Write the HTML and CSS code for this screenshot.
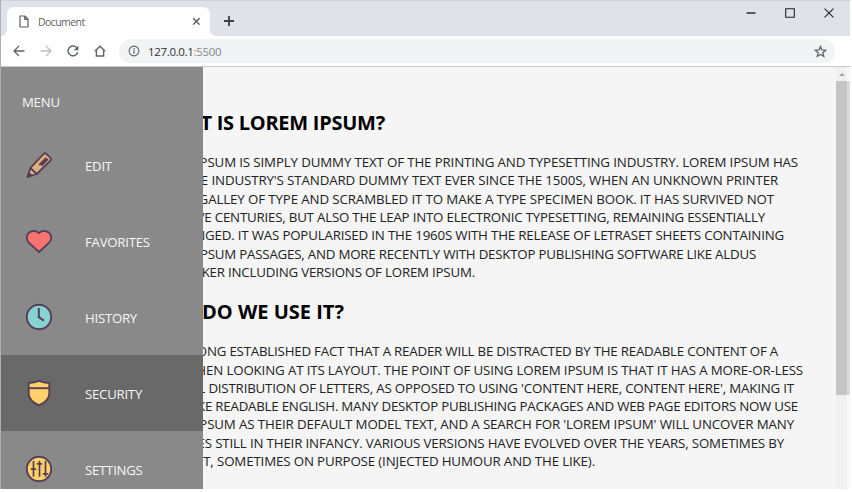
FILE: index.html
```html
<!DOCTYPE html>
<html lang="en">
<head>
<meta charset="utf-8">
<title>Document</title>
<link rel="stylesheet" href="styles.css">
</head>
<body>
<div class="window">
  <header class="tabstrip">
    <div class="tab">
      <svg class="tab-file" width="10" height="13" viewBox="0 0 10 13"><path d="M1 1h5l3 3v8H1zM5.7 1v3.4H9" fill="none" stroke="#5f6368" stroke-width="1.2"/></svg>
      <span class="tab-title">Document</span>
      <svg width="9" height="9" viewBox="0 0 9 9"><path d="M1.2 1.2l6.4 6.4M7.6 1.2L1.2 7.6" stroke="#4b4f54" stroke-width="1.3"/></svg>
    </div>
    <svg class="new-tab" width="12" height="12" viewBox="0 0 12 12"><path d="M6 1v10M1 6h10" stroke="#3c4043" stroke-width="1.8"/></svg>
    <div class="controls">
      <svg width="10" height="10" viewBox="0 0 10 10"><path d="M.5 5h9" stroke="#222" stroke-width="1.4"/></svg>
      <svg width="10" height="10" viewBox="0 0 10 10"><path d="M.7.7h8.6v8.6H.7z" fill="none" stroke="#222" stroke-width="1.1"/></svg>
      <svg width="10" height="10" viewBox="0 0 10 10"><path d="M.6.6l8.8 8.8M9.4.6L.6 9.4" stroke="#222" stroke-width="1.1"/></svg>
    </div>
  </header>
  <div class="toolbar">
    <svg class="nav" width="12" height="12" viewBox="0 0 12 12"><path d="M11.5 6H1.2M6 1L1 6l5 5" fill="none" stroke="#5f6368" stroke-width="1.3"/></svg>
    <svg class="nav" width="12" height="12" viewBox="0 0 12 12"><path d="M.5 6h10.3M6 1l5 5-5 5" fill="none" stroke="#bdc1c6" stroke-width="1.3"/></svg>
    <svg class="nav" width="12" height="12" viewBox="0 0 12 12"><path d="M10.7 7.2A4.9 4.9 0 1 1 9.6 2.6" fill="none" stroke="#5f6368" stroke-width="1.4"/><path d="M11.4.6v4.6H6.8z" fill="#5f6368"/></svg>
    <svg class="nav" width="12" height="12" viewBox="0 0 12 12"><path d="M.8 6.2L6 1.2l5.2 5M2.4 5v6h7.2V5" fill="none" stroke="#5f6368" stroke-width="1.4"/></svg>
    <div class="address">
      <svg width="12" height="12" viewBox="0 0 12 12"><circle cx="6" cy="6" r="4.9" fill="none" stroke="#5f6368" stroke-width="1.1"/><path d="M6 5.3v3.4M6 3.1v1.3" stroke="#5f6368" stroke-width="1.2"/></svg>
      <span class="url">127.0.0.1<span class="port">:5500</span></span>
      <svg width="13" height="13" viewBox="0 0 24 24"><path d="M12 2.8l2.7 6.4 7 .6-5.3 4.6 1.6 6.8-6-3.6-6 3.6 1.6-6.8L2.3 9.8l7-.6z" fill="none" stroke="#5f6368" stroke-width="2.4"/></svg>
    </div>
  </div>
  <div class="viewport">
    <main class="page">
      <h2 class="h-what">What is Lorem Ipsum?</h2>
      <div class="para">
        <div class="a1">Lorem Ipsum is simply dummy text of the printing and typesetting industry. Lorem Ipsum has</div>
        <div class="a2">been the industry's standard dummy text ever since the 1500s, when an unknown printer</div>
        <div class="a3">took a galley of type and scrambled it to make a type specimen book. It has survived not</div>
        <div class="a4">only five centuries, but also the leap into electronic typesetting, remaining essentially</div>
        <div class="a5">unchanged. It was popularised in the 1960s with the release of Letraset sheets containing</div>
        <div class="a6">Lorem Ipsum passages, and more recently with desktop publishing software like Aldus</div>
        <div class="a7">PageMaker including versions of Lorem Ipsum.</div>
      </div>
      <h2 class="h-why">Why do we use it?</h2>
      <div class="para">
        <div class="b1">It is a long established fact that a reader will be distracted by the readable content of a</div>
        <div class="b2">page when looking at its layout. The point of using Lorem Ipsum is that it has a more-or-less</div>
        <div class="b3">normal distribution of letters, as opposed to using 'Content here, content here', making it</div>
        <div class="b4">look like readable English. Many desktop publishing packages and web page editors now use</div>
        <div class="b5">Lorem Ipsum as their default model text, and a search for 'lorem ipsum' will uncover many</div>
        <div class="b6">web sites still in their infancy. Various versions have evolved over the years, sometimes by</div>
        <div class="b7">accident, sometimes on purpose (injected humour and the like).</div>
      </div>
    </main>
    <nav class="sidebar">
      <div class="menu-title">Menu</div>
      <a class="item">
        <svg width="28" height="28" viewBox="0 0 28 28" stroke="#553d58" stroke-width="1.8" stroke-linejoin="round" stroke-linecap="round"><path d="M2.600 25.800L5.400 17 18.700 2.800q1.300-1.200 2.600 0l4.200 4.100q1.200 1.300 0 2.600L11.700 23z" fill="#deb17c"/><path d="M5.400 17l6.300 6M14.800 13.500l6-6.200M17 14l5.500-5.600" fill="none"/><path d="M2.600 25.800l1.200-3.800 2.500 2.500z" fill="#553d58"/></svg>
        <span>Edit</span>
      </a>
      <a class="item">
        <svg width="28" height="28" viewBox="0 0 28 28"><path d="M14 25L3.800 15.600C.7 12.300 1.300 7.800 4.200 5.600 7.400 3.200 11.500 3.700 14 6.100c2.500-2.400 6.600-2.900 9.800-.5 2.900 2.200 3.500 6.700.4 10z" fill="#f8726f" stroke="#553d58" stroke-width="1.900" stroke-linejoin="round"/></svg>
        <span>Favorites</span>
      </a>
      <a class="item">
        <svg width="28" height="28" viewBox="0 0 28 28"><circle cx="14" cy="14" r="12.200" fill="#87d3d2" stroke="#553d58" stroke-width="1.900"/><path d="M13.800 5.800v8.400l4.400 3" fill="none" stroke="#553d58" stroke-width="2" stroke-linecap="round"/></svg>
        <span>History</span>
      </a>
      <a class="item active">
        <svg width="28" height="28" viewBox="0 0 28 28" stroke="#553d58" stroke-width="1.900" stroke-linejoin="round"><path d="M14 1.900Q18.500 3.900 24.300 4v11.300Q23.500 22 14 26.400 4.500 22 3.700 15.300V4Q9.500 3.900 14 1.900z" fill="#ffd16b"/><path d="M3.700 9.200h20.600" fill="none"/></svg>
        <span>Security</span>
      </a>
      <a class="item">
        <svg width="28" height="28" viewBox="0 0 28 28" stroke="#553d58" stroke-width="1.900"><circle cx="14" cy="14" r="12.200" fill="#ffd16b"/><path d="M8.500 6.500v14.500M14.500 6.500v14.500M20.500 6.500v14.500M6.500 14.200h4M12.500 8.800h4M18.500 18.800h4" fill="none" stroke-width="1.700" stroke-linecap="round"/></svg>
        <span>Settings</span>
      </a>
    </nav>
    <div class="scrollbar">
      <div class="arrow"></div>
      <div class="thumb"></div>
    </div>
  </div>
</div>
</body>
</html>
```
FILE: styles.css
```css
* { box-sizing: border-box; }
body { margin: 0; background: #fff; font-family: "Open Sans", "Noto Sans", sans-serif; overflow: hidden; }
svg { display: block; flex: none; }

.window { width: 850px; height: 489px; overflow: hidden; display: flex; flex-direction: column; border-left: 1px solid #aeafb1; }

/* Tab strip */
.tabstrip { height: 36px; flex: none; background: #dfe2e8; border-top: 1px solid #cfd2d7; display: flex; padding-left: 6px; }
.tab { position: relative; width: 203px; height: 29px; margin-top: 6px; padding: 0 9px 0 12px; background: #fff; border-radius: 7px 7px 0 0; display: flex; align-items: center; }
.tab::before, .tab::after { content: ""; position: absolute; bottom: 0; width: 6px; height: 6px; }
.tab::before { left: -6px; background: radial-gradient(circle at 0 0, transparent 5.5px, #fff 6px); }
.tab::after { right: -6px; background: radial-gradient(circle at 100% 0, transparent 5.5px, #fff 6px); }
.tab-title { flex: 1; margin-left: 9px; font-size: 10.5px; letter-spacing: -.58px; color: #5b5f64; }
.new-tab { margin: 14px 0 0 13px; }
.controls { margin-left: auto; display: flex; gap: 29px; padding: 7px 16px 0 0; }

/* Toolbar */
.toolbar { height: 31px; flex: none; background: #fff; border-bottom: 1px solid #c6c6c6; display: flex; align-items: center; padding: 0 15px 0 12px; }
.nav { margin-right: 15px; }
.address { flex: 1; height: 24px; border-radius: 12px; background: #f1f3f4; display: flex; align-items: center; padding: 0 8px 0 9px; margin-left: -2px; }
.url { flex: 1; margin-left: 8px; font-size: 11.5px; letter-spacing: -.33px; color: #2d3033; }
.port { color: #85898e; }

/* Page area: the drawer lies over the article */
.viewport { flex: 1; min-height: 0; display: grid; grid-template-columns: 202px 1fr 14px; background: #f5f5f5; }
.page { grid-area: 1 / 1 / 2 / 3; min-width: 0; overflow: hidden; padding-top: 42px; text-transform: uppercase; text-align: right; }
.page h2 { margin: 0; font-size: 20px; line-height: 27px; font-weight: 700; color: #000; white-space: nowrap; }
.para { margin: 17.2px 0 17.2px; font-size: 13.3px; line-height: 18.27px; color: #222; white-space: nowrap; }
.h-what { width: 384px; letter-spacing: -.26px; }
.h-why { width: 343px; }
.a1 { width: 797px; letter-spacing: -.136px; }
.a2 { width: 777px; letter-spacing: -.117px; }
.a3 { width: 773px; letter-spacing: -.119px; }
.a4 { width: 764px; letter-spacing: -.209px; }
.a5 { width: 783px; letter-spacing: -.179px; }
.a6 { width: 755px; letter-spacing: -.219px; }
.a7 { width: 474px; letter-spacing: -.205px; }
.b1 { width: 777px; letter-spacing: -.214px; }
.b2 { width: 802px; letter-spacing: -.142px; }
.b3 { width: 793px; letter-spacing: -.184px; }
.b4 { width: 797px; letter-spacing: -.233px; }
.b5 { width: 793px; letter-spacing: -.131px; }
.b6 { width: 783px; letter-spacing: -.164px; }
.b7 { width: 594px; letter-spacing: -.141px; }

/* Drawer */
.sidebar { grid-area: 1 / 1 / 2 / 2; z-index: 1; overflow: hidden; background: #898989; color: #f7f7f7; text-transform: uppercase; font-size: 13.2px; letter-spacing: -.24px; }
.menu-title { height: 59.6px; padding: 26px 0 0 21px; line-height: 18px; }
.item { height: 76.2px; display: flex; align-items: center; gap: 32px; padding-left: 24px; }
.item span { padding-top: 2px; }
.item.active { background: #696969; }

/* Scrollbar */
.scrollbar { grid-area: 1 / 3 / 2 / 4; background: linear-gradient(90deg, #f1f1f1 11px, #f8f8f8 11px); }
.arrow { width: 0; height: 0; margin: 6px 0 5px 3px; border: 3px solid transparent; border-top: 0; border-bottom: 3px solid #a3a3a3; }
.thumb { height: 314px; background: linear-gradient(90deg, #c5c5c5 11px, #dadada 11px); }
```
